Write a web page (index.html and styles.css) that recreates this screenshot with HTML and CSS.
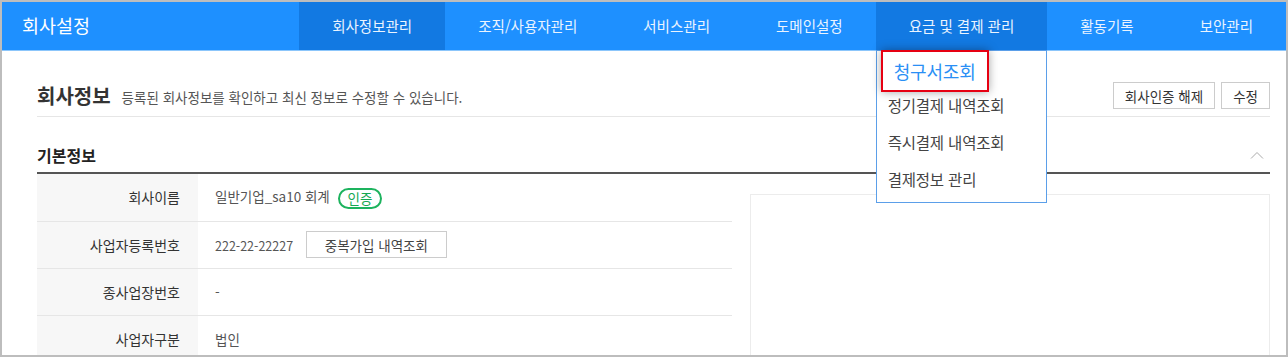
FILE: index.html
```html
<!DOCTYPE html>
<html lang="ko">
<head>
    <meta charset="UTF-8">
    <meta name="viewport" content="width=device-width, initial-scale=1.0">
    <title>회사설정</title>
    <link rel="stylesheet" href="styles.css">
</head>

<body>
<div class="frame">
    <!-- 상단 메뉴 -->
    <div class="header">
        <div class="logo">회사설정</div>
        <ul class="nav">
            <li class="active">회사정보관리</li>
            <li>조직/사용자관리</li>
            <li>서비스관리</li>
            <li>도메인설정</li>
            <li class="open">
                요금 및 결제 관리
                <ul class="dropdown">
                    <li class="current">청구서조회</li>
                    <li>정기결제 내역조회</li>
                    <li>즉시결제 내역조회</li>
                    <li>결제정보 관리</li>
                </ul>
            </li>
            <li>활동기록</li>
            <li>보안관리</li>
        </ul>
    </div>

    <div class="content">
        <div class="page-title">
            <h2>회사정보</h2>
            <span class="desc">등록된 회사정보를 확인하고 최신 정보로 수정할 수 있습니다.</span>
            <div class="title-buttons">
                <button class="btn">회사인증 해제</button>
                <button class="btn">수정</button>
            </div>
        </div>

        <div class="section-head">
            <h3>기본정보</h3>
            <svg class="fold" width="14" height="8" viewBox="0 0 14 8">
                <polyline points="1,7.5 7,1.5 13,7.5" fill="none" stroke="#aaa" stroke-width="1"/>
            </svg>
        </div>

        <div class="section-body">
            <table class="info-table">
                <tr>
                    <th>회사이름</th>
                    <td>일반기업_sa10 회계 <span class="badge">인증</span></td>
                </tr>
                <tr>
                    <th>사업자등록번호</th>
                    <td><span class="num">222-22-22227</span> <button class="btn btn-sub">중복가입 내역조회</button></td>
                </tr>
                <tr>
                    <th>종사업장번호</th>
                    <td>-</td>
                </tr>
                <tr>
                    <th>사업자구분</th>
                    <td>법인</td>
                </tr>
            </table>
            <div class="side-panel"></div>
        </div>
    </div>
</div>
</body>
</html>
```

FILE: styles.css
```css
* {
    box-sizing: border-box;
    margin: 0;
    padding: 0;
}

body {
    font-family: "Noto Sans CJK KR", "Liberation Sans", sans-serif;
    background: #fff;
    color: #333;
}

ul {
    list-style: none;
}

.frame {
    height: 357px;
    border: 2px solid #bdbdbd;
    overflow: hidden;
}

/* 상단 메뉴 */
.header {
    display: flex;
    justify-content: space-between;
    height: 49px;
    background: #1e90ff;
    border-bottom: 1px solid #8cc6fb;
}

.logo {
    padding-left: 20px;
    line-height: 46px;
    font-size: 18.5px;
    color: #fff;
}

.nav {
    display: flex;
}

.nav > li {
    position: relative;
    padding: 0 33px;
    line-height: 48px;
    font-size: 14.5px;
    color: #eaf4ff;
    white-space: nowrap;
}

.nav > li.active,
.nav > li.open {
    background: #1279e2;
}

.dropdown {
    position: absolute;
    top: 100%;
    left: 0;
    width: 100%;
    background: #fff;
    border: 1px solid #5b9fe9;
    padding: 0 0 4px;
    z-index: 10;
}

.dropdown li {
    padding-left: 11px;
    line-height: 37px;
    font-size: 15.5px;
    letter-spacing: -0.2px;
    color: #444;
}

.dropdown li.current {
    width: 108px;
    height: 42px;
    margin: -1px 0 -5px 4px;
    padding-left: 11px;
    line-height: 38px;
    font-size: 18px;
    color: #2a8ff5;
    background: #fff;
    border: 2px solid #e60012;
    box-shadow: 0 0 9px rgba(0, 0, 0, 0.35);
    position: relative;
}

/* 본문 */
.content {
    padding: 0 16px 0 35px;
}

.page-title {
    display: flex;
    align-items: flex-end;
    padding: 31px 0 7px;
    border-bottom: 1px solid #e6e6e6;
}

.page-title h2 {
    font-size: 20px;
    font-weight: bold;
    line-height: 27px;
    color: #333;
}

.desc {
    margin-left: 11px;
    font-size: 13.5px;
    line-height: 24px;
    color: #555;
}

.title-buttons {
    margin-left: auto;
    display: flex;
    gap: 6px;
}

.btn {
    height: 27px;
    padding: 0 11px;
    background: #fff;
    border: 1px solid #ccc;
    font-family: inherit;
    font-size: 13.5px;
    color: #333;
}

.section-head {
    display: flex;
    justify-content: space-between;
    align-items: center;
    height: 57px;
    padding-top: 20px;
    border-bottom: 2px solid #555;
}

.section-head h3 {
    font-size: 16px;
    font-weight: bold;
    color: #222;
}

.fold {
    margin-right: 6px;
}

.section-body {
    display: flex;
    align-items: flex-start;
    gap: 18px;
}

.info-table {
    width: 695px;
    border-collapse: collapse;
    font-size: 14px;
}

.info-table tr {
    height: 47px;
    border-bottom: 1px solid #e6e6e6;
}

.info-table th {
    width: 161px;
    padding-right: 18px;
    background: #f7f7f7;
    text-align: right;
    font-weight: normal;
    color: #333;
}

.info-table td {
    padding-left: 17px;
    font-size: 13.5px;
    color: #555;
}

.num {
    font-size: 12.5px;
}

.btn-sub {
    width: 141px;
    margin-left: 9px;
    color: #444;
}

.badge {
    display: inline-block;
    margin-left: 4px;
    padding: 0 8px;
    height: 21px;
    line-height: 17px;
    border: 2px solid #1db35e;
    border-radius: 11px;
    color: #17a853;
    font-size: 13.5px;
    vertical-align: middle;
}

.side-panel {
    flex: 1;
    height: 300px;
    margin-top: 20px;
    border: 1px solid #ececec;
}
```
